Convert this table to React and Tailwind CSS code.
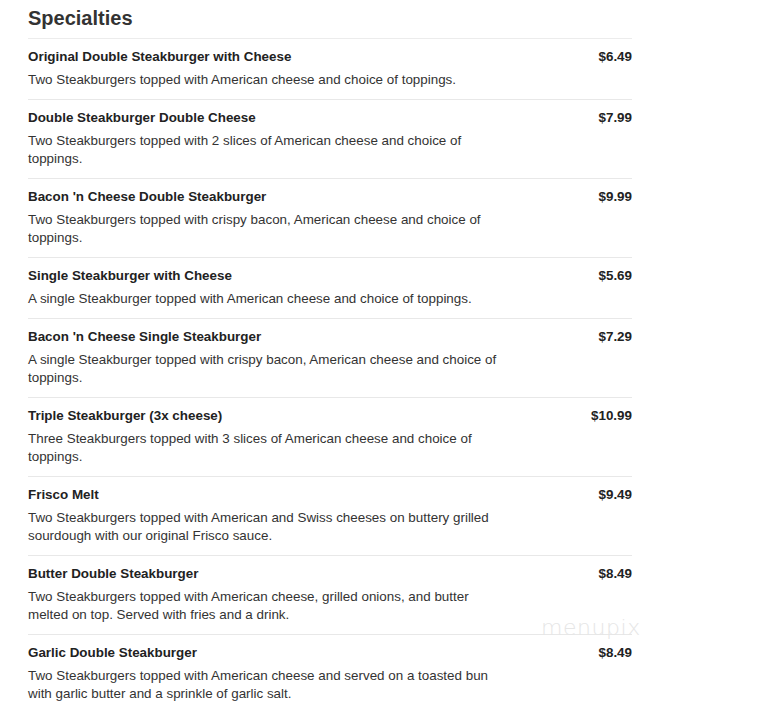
import React from 'react';

const ITEMS = [
    { name: "Original Double Steakburger with Cheese", price: "$6.49", desc: "Two Steakburgers topped with American cheese and choice of toppings." },
    { name: "Double Steakburger Double Cheese", price: "$7.99", desc: "Two Steakburgers topped with 2 slices of American cheese and choice of toppings." },
    { name: "Bacon 'n Cheese Double Steakburger", price: "$9.99", desc: "Two Steakburgers topped with crispy bacon, American cheese and choice of toppings." },
    { name: "Single Steakburger with Cheese", price: "$5.69", desc: "A single Steakburger topped with American cheese and choice of toppings." },
    { name: "Bacon 'n Cheese Single Steakburger", price: "$7.29", desc: "A single Steakburger topped with crispy bacon, American cheese and choice of toppings." },
    { name: "Triple Steakburger (3x cheese)", price: "$10.99", desc: "Three Steakburgers topped with 3 slices of American cheese and choice of toppings." },
    { name: "Frisco Melt", price: "$9.49", desc: "Two Steakburgers topped with American and Swiss cheeses on buttery grilled sourdough with our original Frisco sauce." },
    { name: "Butter Double Steakburger", price: "$8.49", desc: "Two Steakburgers topped with American cheese, grilled onions, and butter melted on top. Served with fries and a drink." },
    { name: "Garlic Double Steakburger", price: "$8.49", desc: "Two Steakburgers topped with American cheese and served on a toasted bun with garlic butter and a sprinkle of garlic salt." },
];

export default function App() {
    return (
        <div className="relative w-[775px] h-[713px] overflow-hidden bg-white font-['Liberation_Sans',Arial,sans-serif]">
            <div className="ml-[28px] w-[604px]">
                {/* Titre */}
                <div className="pt-[6px] pb-[8px] border-b border-[#ececec]">
                    <h1 className="text-[20px] leading-6 font-bold text-[#333]">Specialties</h1>
                </div>

                {ITEMS.map(item => (
                    <div key={item.name} className="flex justify-between pt-[10px] pb-[10px] border-b border-[#e8e8e8]">
                        <div>
                            <p className="text-[13.4px] leading-4 font-bold text-[#222]">{item.name}</p>
                            <p className="mt-[6px] w-[478px] text-[13.4px] leading-[18px] text-[#333]">{item.desc}</p>
                        </div>
                        <span className="text-[13.4px] leading-4 font-bold text-[#222]">{item.price}</span>
                    </div>
                ))}
            </div>

            {/* Filigrane */}
            <span className="absolute left-[541px] top-[616px] text-[22px] leading-6 font-light tracking-wide text-[#e6e6e6] font-['DejaVu_Sans',sans-serif]">menupix</span>
        </div>
    );
}
